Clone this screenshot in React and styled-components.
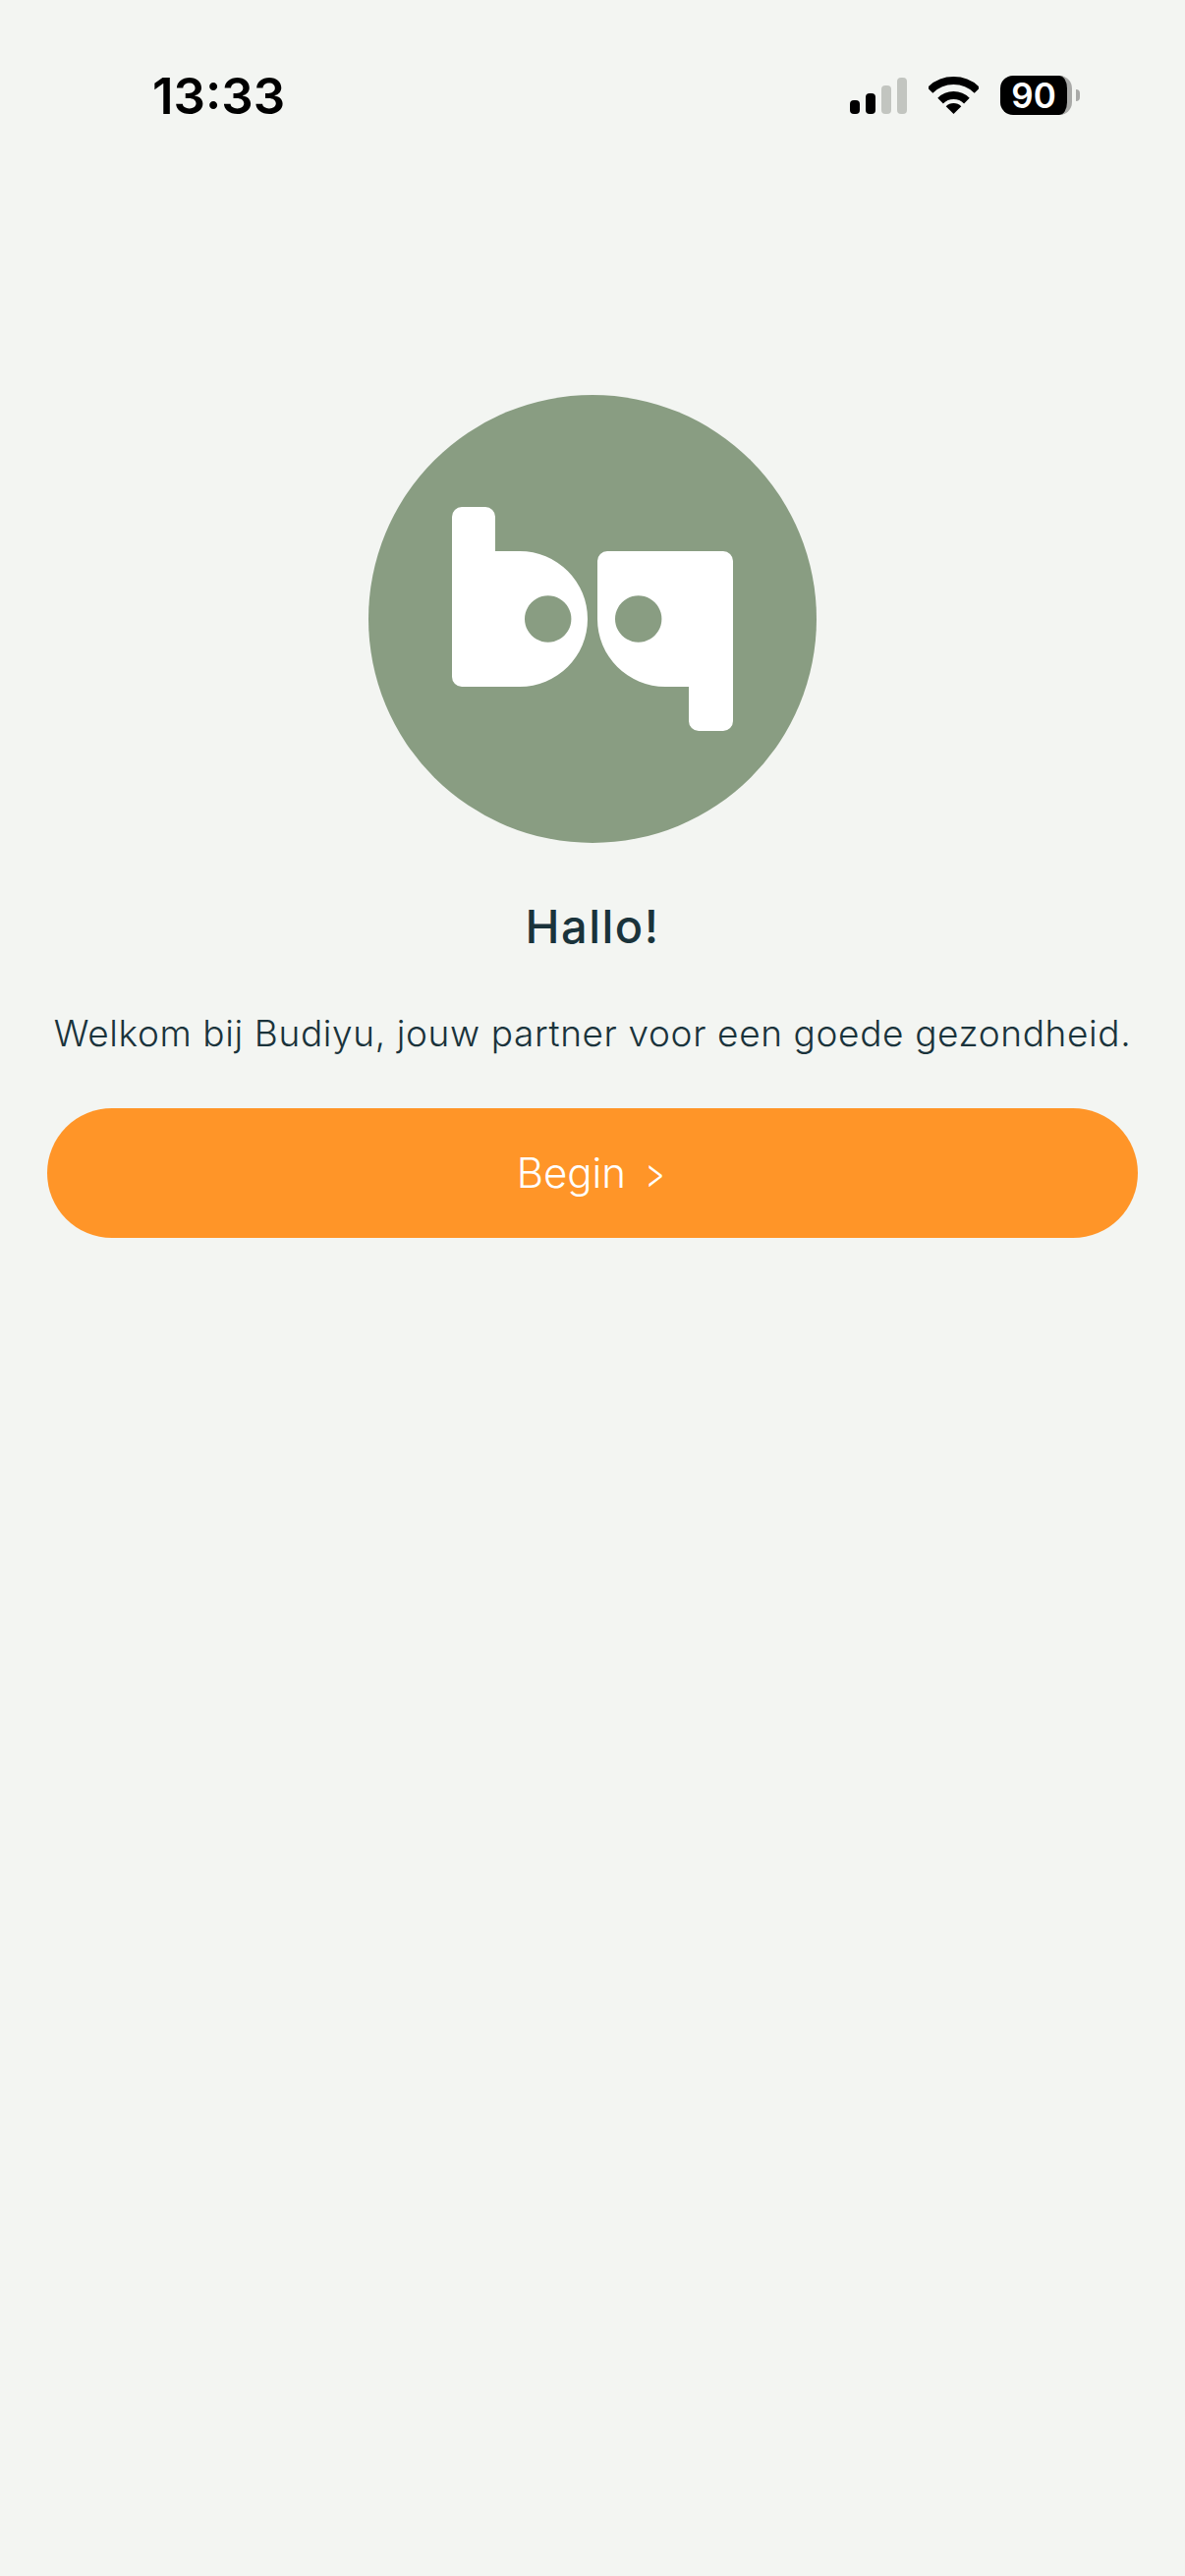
import React from "react";
import styled, { createGlobalStyle } from "styled-components";

const Global = createGlobalStyle`
  html, body { margin: 0; padding: 0; background: #f3f5f2; }
  body { font-family: Inter, "Noto Sans", sans-serif; }
`;

const Page = styled.div`
  width: 1206px;
  height: 2622px;
  background: #f3f5f2;
  display: flex;
  flex-direction: column;
  overflow: hidden;
`;

const StatusBar = styled.header`
  height: 196px;
  box-sizing: border-box;
  padding: 68px 107px 0 155px;
  display: flex;
  justify-content: space-between;
  align-items: flex-start;
`;

const Time = styled.span`
  font-size: 51px;
  font-weight: 600;
  line-height: 60px;
  color: #000;
  letter-spacing: 0;
`;

const StatusIcons = styled.div`
  display: flex;
  align-items: center;
  height: 60px;
  gap: 22px;
  margin-top: -1px;
`;

const Signal = styled.div`
  display: flex;
  align-items: flex-end;
  gap: 6px;
  height: 37px;
`;

const Bar = styled.span`
  width: 10px;
  height: ${(p) => p.$h}px;
  border-radius: 4px;
  background: ${(p) => (p.$on ? "#000" : "#c2c5c0")};
`;

const Battery = styled.div`
  display: flex;
  align-items: center;
  gap: 4px;
`;

const BatteryBody = styled.div`
  width: 73px;
  height: 40px;
  box-sizing: border-box;
  border-radius: 13px;
  border-right: 5px solid #a9aaa8;
  background: #000;
  color: #fff;
  font-size: 35px;
  font-weight: 600;
  line-height: 41px;
  text-align: center;
`;

const BatteryCap = styled.span`
  width: 4px;
  height: 12px;
  border-radius: 0 6px 6px 0;
  background: #a9aaa8;
`;

const Main = styled.main`
  padding: 206px 48px 0;
  display: flex;
  flex-direction: column;
  align-items: center;
`;

const Avatar = styled.div`
  width: 456px;
  height: 456px;
  border-radius: 50%;
  background: #899d82;
  display: flex;
  align-items: center;
  justify-content: center;
`;

const Title = styled.h1`
  margin: 54px 0 0;
  font-size: 47px;
  font-weight: 500;
  letter-spacing: 1.5px;
  line-height: 62px;
  color: #1a333b;
  text-align: center;
`;

const Lead = styled.p`
  margin: 53px 0 0;
  font-size: 37px;
  font-weight: 300;
  letter-spacing: 0.62px;
  line-height: 50px;
  color: #1a333b;
  text-align: center;
  white-space: nowrap;
`;

const BeginButton = styled.button`
  margin-top: 51px;
  width: 1110px;
  height: 132px;
  border: 0;
  border-radius: 66px;
  background: #ff9528;
  color: #fff;
  font-family: inherit;
  font-size: 42px;
  font-weight: 300;
  line-height: 50px;
`;

const Chevron = styled.span`
  display: inline-block;
  margin-left: 4px;
  transform: scaleX(0.72);
`;

const Wifi = () => (
  <svg width="51" height="38" viewBox="0 0 51 38" fill="none">
    <path d="M1.5 14A34 34 0 0 1 49.5 14" stroke="#000" strokeWidth="8" />
    <path d="M12.1 24.6A19 19 0 0 1 38.9 24.6" stroke="#000" strokeWidth="8" />
    <path d="M25.5 38L17.7 30.2A11 11 0 0 1 33.3 30.2Z" fill="#000" />
  </svg>
);

const Logo = () => (
  <svg width="286" height="228" viewBox="0 0 286 228">
    <path
      fillRule="evenodd"
      fill="#fff"
      d="M10 0H34A10 10 0 0 1 44 10V45H69A69 69 0 0 1 69 183H10A10 10 0 0 1 0 173V10A10 10 0 0 1 10 0ZM121.4 114A23.7 23.7 0 1 0 121.4 114.01Z"
    />
    <path
      fillRule="evenodd"
      fill="#fff"
      d="M158 45H276A10 10 0 0 1 286 55V218A10 10 0 0 1 276 228H251A10 10 0 0 1 241 218V183H217A69 69 0 0 1 148 114V55A10 10 0 0 1 158 45ZM213.4 114A23.7 23.7 0 1 0 213.4 114.01Z"
    />
  </svg>
);

export default function App() {
  return (
    <Page>
      <Global />
      <StatusBar>
        <Time>13:33</Time>
        <StatusIcons>
          <Signal>
            <Bar $h={14} $on />
            <Bar $h={21} $on />
            <Bar $h={29} />
            <Bar $h={37} />
          </Signal>
          <Wifi />
          <Battery>
            <BatteryBody>90</BatteryBody>
            <BatteryCap />
          </Battery>
        </StatusIcons>
      </StatusBar>
      <Main>
        <Avatar>
          <Logo />
        </Avatar>
        <Title>Hallo!</Title>
        <Lead>Welkom bij Budiyu, jouw partner voor een goede gezondheid.</Lead>
        <BeginButton>
          Begin <Chevron>&gt;</Chevron>
        </BeginButton>
      </Main>
    </Page>
  );
}
